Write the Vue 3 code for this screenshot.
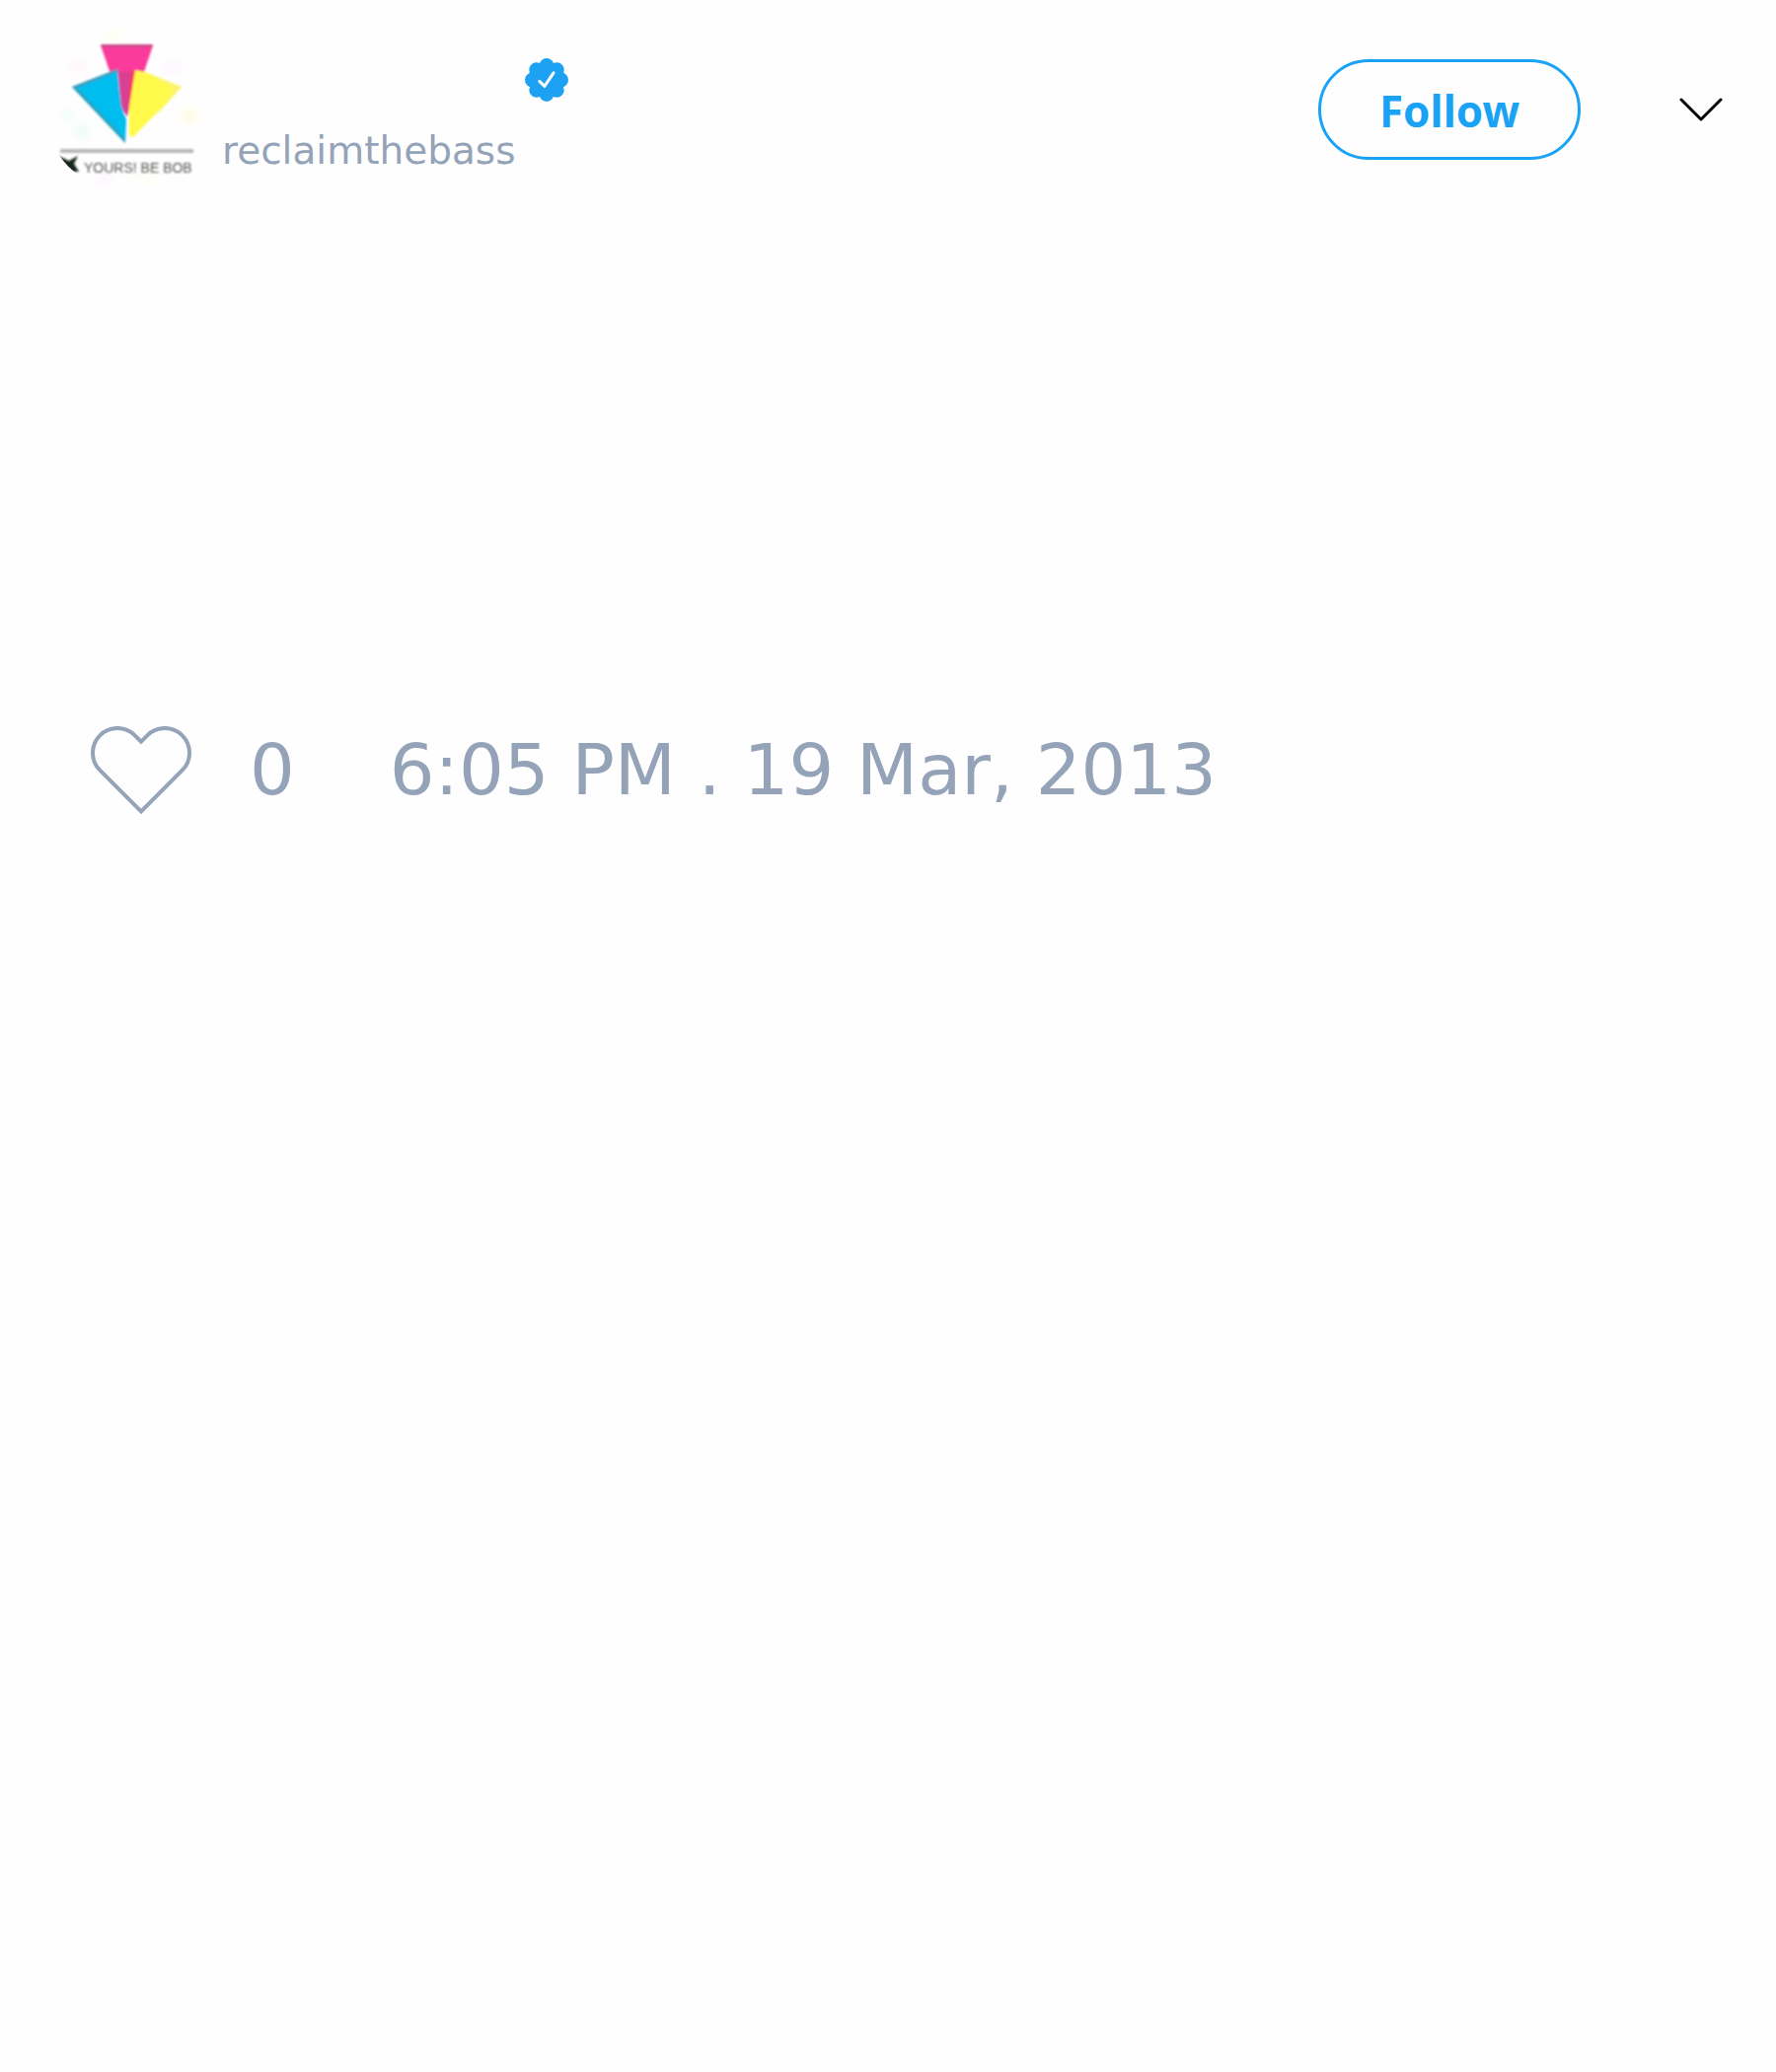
<script setup>
const post = {
  handle: 'reclaimthebass',
  likes: 0,
  time: '6:05 PM . 19 Mar, 2013',
}
const lobes = [0, 45, 90, 135, 180, 225, 270, 315]
</script>

<template>
  <article class="post">
    <header class="top">
      <svg class="avatar" viewBox="0 0 166 166" role="img" aria-label="Profile picture">
        <defs>
          <clipPath id="round"><circle cx="83" cy="83" r="83" /></clipPath>
          <filter id="soft"><feGaussianBlur stdDeviation="1.2" /></filter>
          <filter id="haze" x="-10%" y="-10%" width="120%" height="120%"><feGaussianBlur stdDeviation="5" /></filter>
        </defs>
        <g clip-path="url(#round)">
          <rect width="166" height="166" fill="#fffefe" />
          <g filter="url(#haze)">
            <circle cx="24" cy="90" r="7" fill="#effdf6" />
            <circle cx="38" cy="106" r="7" fill="#e6fcf8" />
            <circle cx="147" cy="91" r="7" fill="#fdfddc" />
            <circle cx="34" cy="42" r="9" fill="#fff8fc" />
            <circle cx="130" cy="42" r="9" fill="#fdf8ff" />
            <circle cx="60" cy="155" r="8" fill="#fdf6ff" />
            <circle cx="104" cy="155" r="8" fill="#fbfff3" />
            <circle cx="68" cy="6" r="8" fill="#fbfff0" />
          </g>
          <g filter="url(#soft)">
            <path d="M57 19H110L101 46L90 60L84 91L76 80L66 45Z" fill="#fb3a9b" />
            <path d="M57 18H110L109 21H58Z" fill="#c94a86" />
            <path d="M76 46H91L84 91L78 82Z" fill="#d84091" />
            <path d="M91 45L86 82L84 91L88 46Z" fill="#ff3b4e" />
            <path d="M28 61L74 43L78 80L83 94L82 118Z" fill="#06bdf0" />
            <path d="M28 61L74 43L75 45L31 63Z" fill="#3a9bb5" />
            <path d="M28 61L82 118L82 114L34 63Z" fill="#2b9fb8" />
            <path d="M92 44L102 46L139 61L90 112L86 110L86 82Z" fill="#fff94a" />
            <path d="M102 46L139 61L112 92L132 63Z" fill="#fbf470" />
            <path d="M16 126H151" stroke="#b7b7b7" stroke-width="4" />
            <path d="M14 131L25 136L34 131L30 139L35 147L26 147L18 143Z" fill="#15251f" />
          </g>
        </g>
        <text x="40" y="148" class="motto" filter="url(#soft)">YOURS! BE BOB</text>
      </svg>

      <div class="identity">
        <svg class="badge" viewBox="-22 -22 44 44" role="img" aria-label="Verified account">
          <g fill="#1da1f2">
            <circle r="16" />
            <circle v-for="a in lobes" :key="a" cx="14.6" r="7.4" :transform="`rotate(${a})`" />
          </g>
          <path d="M-7.2 1.4L-2.1 6.4L7 -7.2" fill="none" stroke="#fff" stroke-width="3" stroke-linecap="round" stroke-linejoin="round" />
        </svg>
        <a class="handle" href="#">{{ post.handle }}</a>
      </div>

      <div class="actions">
        <button class="follow" type="button">Follow</button>
        <button class="more" type="button" aria-label="More options">
          <svg viewBox="0 0 44 24" width="44" height="24">
            <path d="M2 2L22 22L42 2" fill="none" stroke="#000" stroke-width="3" stroke-linecap="round" stroke-linejoin="round" />
          </svg>
        </button>
      </div>
    </header>

    <footer class="meta">
      <button class="like" type="button" aria-label="Like">
        <svg viewBox="0 0 102 90" width="102" height="90">
          <path d="M51 86.400L9.300 44.700A25 25 0 0 1 44.700 9.300L51 15.600L57.300 9.300A25 25 0 0 1 92.700 44.700Z" fill="none" stroke="#94a3b8" stroke-width="4" />
        </svg>
      </button>
      <span class="count">{{ post.likes }}</span>
      <time datetime="2013-03-19T18:05">{{ post.time }}</time>
    </footer>
  </article>
</template>

<style>
body {
  background: #fefefe;
}
</style>

<style scoped>
.post {
  box-sizing: border-box;
  padding: 27px 54px 48px 45px;
  font-family: "DejaVu Sans", sans-serif;
  color: #94a3b8;
}

.top {
  display: flex;
  align-items: flex-start;
  gap: 14px;
}

.avatar {
  flex: none;
  width: 166px;
  height: 166px;
}

.motto {
  font: 14px "Liberation Sans", sans-serif;
  fill: #555;
}

.identity {
  display: flex;
  flex-direction: column;
  gap: 25px;
  margin-top: 32px;
}

.badge {
  width: 44px;
  height: 44px;
  margin-left: 307px;
}

.handle {
  font-size: 39px;
  line-height: 49px;
  color: inherit;
  text-decoration: none;
}

.actions {
  display: flex;
  align-items: center;
  gap: 100px;
  margin-top: 33px;
  margin-left: auto;
}

button {
  padding: 0;
  border: 0;
  background: none;
  cursor: pointer;
}

button svg {
  display: block;
}

.follow {
  box-sizing: border-box;
  width: 266px;
  height: 102px;
  padding-top: 1px;
  border: 3px solid #1aa3f5;
  border-radius: 51px;
  font: bold 44px "Noto Sans", sans-serif;
  color: #1aa3f5;
}

.meta {
  display: flex;
  align-items: flex-start;
  margin-top: 543px;
  padding-left: 47px;
  font-size: 72px;
  line-height: 88px;
}

.count {
  margin: 0 96px 0 59px;
}
</style>
